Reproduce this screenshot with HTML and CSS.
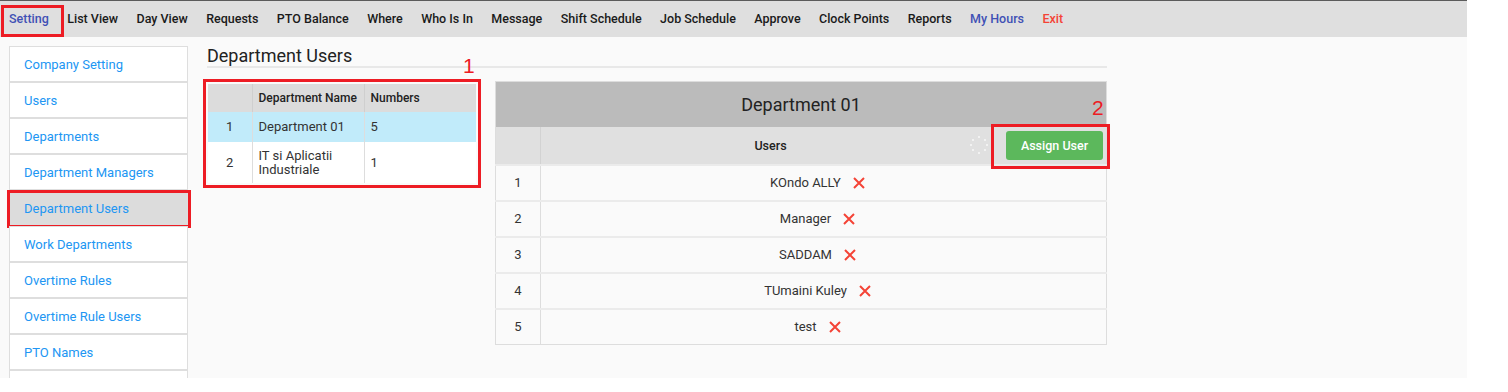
FILE: index.html
```html
<!DOCTYPE html>
<html lang="en">
<head>
    <meta charset="UTF-8">
    <title>Department Users</title>
    <link rel="stylesheet" href="styles.css">
</head>
<body>
    <div class="page">
        <nav class="topnav">
            <a class="nav-link nav-blue marked">Setting</a>
            <a class="nav-link">List View</a>
            <a class="nav-link">Day View</a>
            <a class="nav-link">Requests</a>
            <a class="nav-link">PTO Balance</a>
            <a class="nav-link">Where</a>
            <a class="nav-link">Who Is In</a>
            <a class="nav-link">Message</a>
            <a class="nav-link">Shift Schedule</a>
            <a class="nav-link">Job Schedule</a>
            <a class="nav-link">Approve</a>
            <a class="nav-link">Clock Points</a>
            <a class="nav-link">Reports</a>
            <a class="nav-link nav-blue">My Hours</a>
            <a class="nav-link nav-red">Exit</a>
        </nav>

        <div class="layout">
            <aside class="side-menu">
                <a class="side-item">Company Setting</a>
                <a class="side-item">Users</a>
                <a class="side-item">Departments</a>
                <a class="side-item">Department Managers</a>
                <a class="side-item active marked">Department Users</a>
                <a class="side-item">Work Departments</a>
                <a class="side-item">Overtime Rules</a>
                <a class="side-item">Overtime Rule Users</a>
                <a class="side-item">PTO Names</a>
                <a class="side-item"></a>
            </aside>

            <main class="content">
                <h2 class="page-title">Department Users</h2>
                <span class="note note-1">1</span>
                <span class="note note-2">2</span>

                <div class="tables">
                    <table class="dept-table">
                        <colgroup>
                            <col style="width: 44px">
                            <col style="width: 112px">
                            <col style="width: 112px">
                        </colgroup>
                        <thead>
                            <tr>
                                <th></th>
                                <th>Department Name</th>
                                <th>Numbers</th>
                            </tr>
                        </thead>
                        <tbody>
                            <tr class="selected">
                                <td class="num">1</td>
                                <td>Department 01</td>
                                <td>5</td>
                            </tr>
                            <tr class="tall">
                                <td class="num">2</td>
                                <td>IT si Aplicatii Industriale</td>
                                <td>1</td>
                            </tr>
                        </tbody>
                    </table>

                    <table class="users-table">
                        <colgroup>
                            <col style="width: 45px">
                            <col>
                        </colgroup>
                        <thead>
                            <tr class="title-row">
                                <th colspan="2">Department 01</th>
                            </tr>
                            <tr class="head-row">
                                <th></th>
                                <th>
                                    <div class="head-cell">
                                        <span class="head-label">Users</span>
                                        <svg class="loader" width="18" height="22" viewBox="0 0 18 22">
                                            <circle cx="9" cy="3" r="1" />
                                            <circle cx="15" cy="6" r="1" />
                                            <circle cx="17" cy="11" r="1" />
                                            <circle cx="15" cy="16" r="1" />
                                            <circle cx="9" cy="19" r="1" />
                                            <circle cx="3" cy="16" r="1" />
                                            <circle cx="1" cy="11" r="1" />
                                            <circle cx="3" cy="6" r="1" />
                                        </svg>
                                        <button class="btn-assign marked">Assign User</button>
                                    </div>
                                </th>
                            </tr>
                        </thead>
                        <tbody>
                            <tr>
                                <td class="num">1</td>
                                <td class="user-cell">KOndo ALLY<span class="remove"><svg width="12" height="12" viewBox="0 0 12 12"><path d="M1 1 L11 11 M11 1 L1 11" /></svg></span></td>
                            </tr>
                            <tr>
                                <td class="num">2</td>
                                <td class="user-cell">Manager<span class="remove"><svg width="12" height="12" viewBox="0 0 12 12"><path d="M1 1 L11 11 M11 1 L1 11" /></svg></span></td>
                            </tr>
                            <tr>
                                <td class="num">3</td>
                                <td class="user-cell">SADDAM<span class="remove"><svg width="12" height="12" viewBox="0 0 12 12"><path d="M1 1 L11 11 M11 1 L1 11" /></svg></span></td>
                            </tr>
                            <tr>
                                <td class="num">4</td>
                                <td class="user-cell">TUmaini Kuley<span class="remove"><svg width="12" height="12" viewBox="0 0 12 12"><path d="M1 1 L11 11 M11 1 L1 11" /></svg></span></td>
                            </tr>
                            <tr>
                                <td class="num">5</td>
                                <td class="user-cell">test<span class="remove"><svg width="12" height="12" viewBox="0 0 12 12"><path d="M1 1 L11 11 M11 1 L1 11" /></svg></span></td>
                            </tr>
                        </tbody>
                    </table>
                </div>
            </main>
        </div>
    </div>
</body>
</html>
```

FILE: styles.css
```css
* {
    margin: 0;
    padding: 0;
    box-sizing: border-box;
}

body {
    font-family: Roboto, 'Liberation Sans', sans-serif;
    background: #ffffff;
    color: #333333;
}

.page {
    width: 1467px;
    height: 378px;
    overflow: hidden;
    background: #fafafa;
}

/* top navigation */
.topnav {
    display: flex;
    align-items: center;
    gap: 18.4px;
    height: 37px;
    padding-left: 9px;
    background: #dfdfdf;
    border-top: 1px solid #5b5b5b;
}

.nav-link {
    position: relative;
    font-size: 12.5px;
    font-weight: 500;
    line-height: 36px;
    color: #1a1a1a;
    text-decoration: none;
    cursor: pointer;
}

.nav-blue {
    color: #3f51b5;
}

.nav-red {
    color: #f44336;
}

.nav-link.marked::after {
    content: "";
    position: absolute;
    top: 4px;
    bottom: 0;
    left: -8px;
    right: -15px;
    border: 3px solid #ed1c24;
}

/* page body */
.layout {
    display: flex;
    gap: 19px;
    padding-left: 9px;
}

.side-menu {
    width: 179px;
    margin-top: 9px;
    display: flex;
    flex-direction: column;
}

.side-item {
    position: relative;
    display: block;
    height: 36px;
    padding: 1px 0 0 14px;
    line-height: 34px;
    font-size: 13px;
    color: #2196f3;
    background: #ffffff;
    border: 1px solid #dedede;
    cursor: pointer;
}

.side-item.active {
    background: #dcdcdc;
}

.side-item.marked::after {
    content: "";
    position: absolute;
    top: -1px;
    bottom: -3px;
    left: -3px;
    right: -4px;
    border: 3px solid #ed1c24;
}

.content {
    position: relative;
    width: 900px;
    padding-top: 7px;
}

.page-title {
    font-size: 18px;
    font-weight: 400;
    line-height: 21px;
    padding-top: 1px;
    color: #222222;
    border-bottom: 2px solid #e8e8e8;
}

.note {
    position: absolute;
    font-family: 'Liberation Sans', sans-serif;
    font-size: 21px;
    line-height: 21px;
    color: #ed1c24;
}

.note-1 {
    left: 256px;
    top: 18px;
}

.note-2 {
    left: 885px;
    top: 60px;
}

.tables {
    display: flex;
    align-items: flex-start;
    gap: 19px;
    margin-top: 13px;
    padding-left: 1px;
}

/* department list */
.dept-table {
    width: 268px;
    margin-top: 3px;
    border-collapse: collapse;
    table-layout: fixed;
    font-size: 13px;
    outline: 3px solid #ed1c24;
    outline-offset: 2px;
}

.dept-table th {
    height: 28px;
    padding: 0 6px;
    text-align: left;
    white-space: nowrap;
    font-size: 12px;
    font-weight: 500;
    color: #222222;
    background: #dcdcdc;
    border-left: 1px solid #cfcfcf;
}

.dept-table td {
    padding: 6px 6px;
    line-height: 14px;
    color: #333333;
    background: #ffffff;
    border-left: 1px solid #dddddd;
}

.dept-table th:first-child,
.dept-table td:first-child {
    border-left: none;
}

.dept-table td.num {
    text-align: center;
}

.dept-table tr.selected td {
    height: 30px;
    background: #c1ebfa;
}

.dept-table tr.tall td {
    height: 41px;
}

/* users of the selected department */
.users-table {
    width: 612px;
    border-collapse: collapse;
    table-layout: fixed;
    font-size: 13px;
    border: 1px solid #dddddd;
}

.title-row th {
    height: 45px;
    font-size: 18px;
    font-weight: 400;
    color: #222222;
    background: #bbbbbb;
}

.head-row th {
    height: 38px;
    background: #e0e0e0;
    font-size: 12.5px;
    font-weight: 500;
    color: #222222;
}

.head-row th:first-child {
    border-right: 1px solid #d2d2d2;
}

.head-cell {
    display: flex;
    align-items: center;
    padding-right: 3px;
}

.head-label {
    flex: 1;
    padding-left: 30px;
    text-align: center;
}

.loader {
    flex-shrink: 0;
    fill: #ffffff;
    opacity: 0.8;
}

.btn-assign {
    position: relative;
    flex-shrink: 0;
    width: 97px;
    height: 29px;
    margin-left: 18px;
    border: none;
    border-radius: 3px;
    background: #5cb85c;
    color: #ffffff;
    font-family: Roboto, 'Liberation Sans', sans-serif;
    font-size: 12.5px;
    font-weight: 500;
    cursor: pointer;
}

.btn-assign.marked::after {
    content: "";
    position: absolute;
    top: -7px;
    bottom: -9px;
    left: -15px;
    right: -7px;
    border: 3px solid #ed1c24;
}

.users-table td {
    height: 36px;
    background: #fafafa;
    border-top: 2px solid #ebebeb;
    color: #333333;
}

.users-table td.num {
    text-align: center;
    border-right: 1px solid #dddddd;
}

.user-cell {
    text-align: center;
}

.remove {
    display: inline-block;
    margin: 0 12px;
    vertical-align: -2px;
}

.remove svg {
    display: block;
    stroke: #f44336;
    stroke-width: 2;
    fill: none;
}
```
